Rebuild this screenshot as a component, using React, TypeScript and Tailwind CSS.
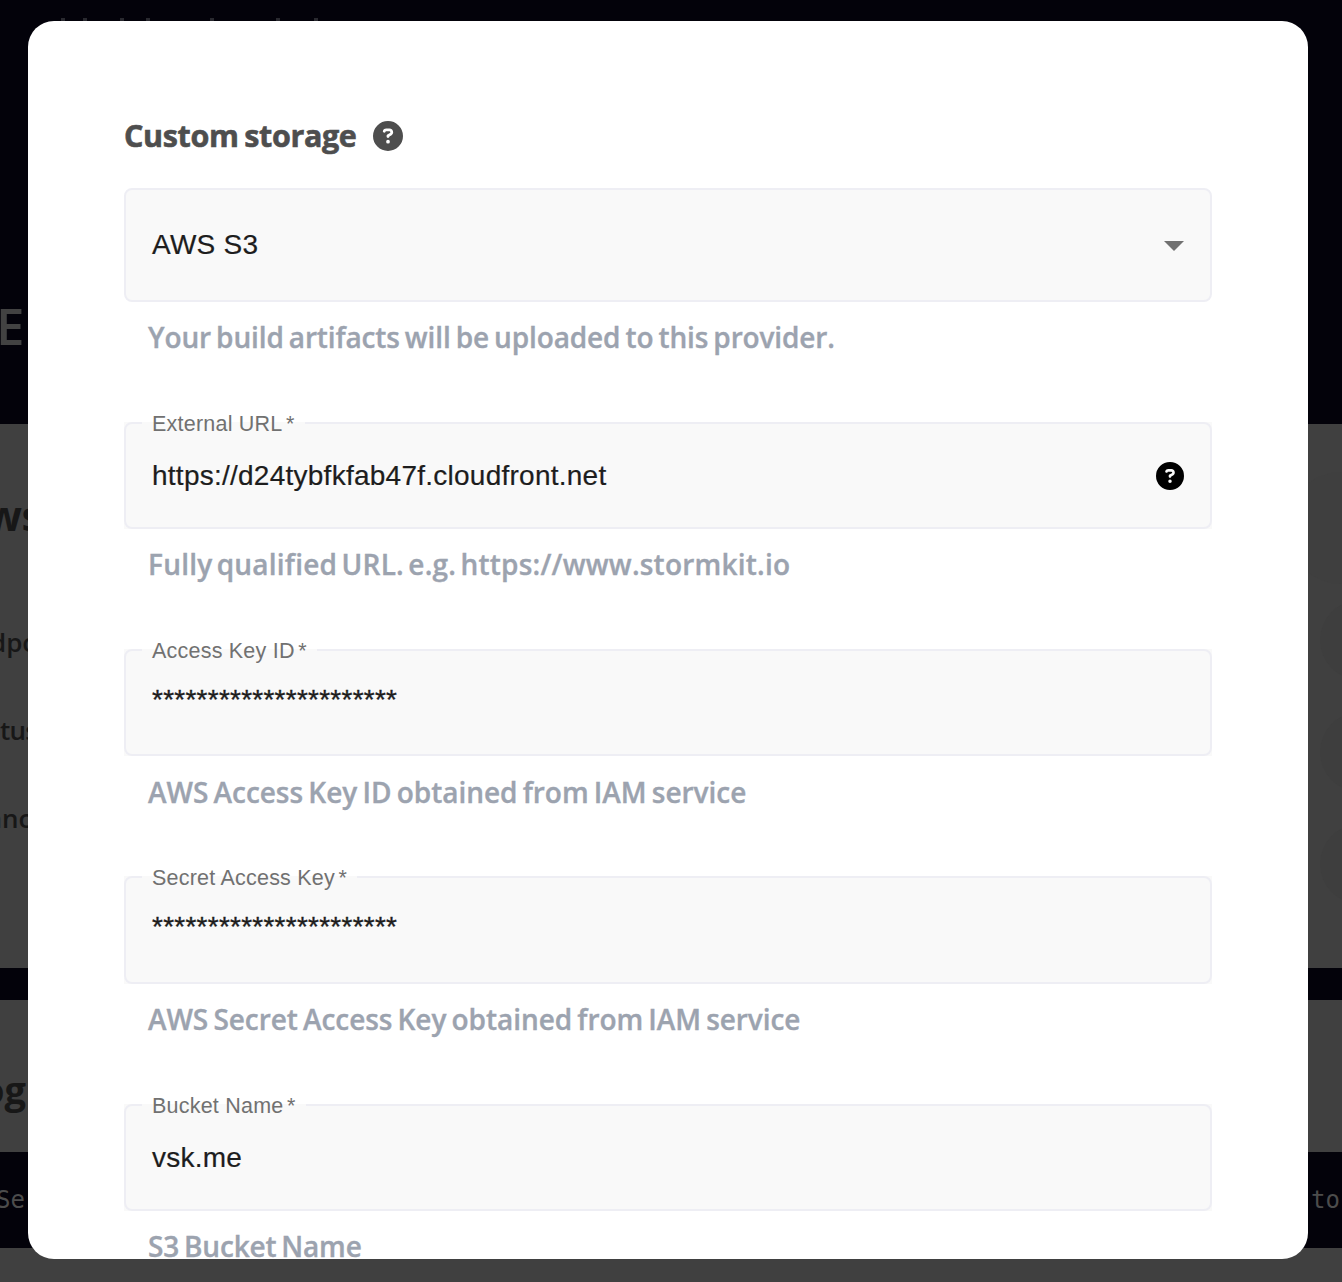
import { FaCircleQuestion } from "react-icons/fa6";
import { MdArrowDropDown } from "react-icons/md";

type FieldProps = {
  label: string;
  value: string;
  helper: string;
  info?: boolean;
  className?: string;
  boxClass?: string;
  valueClass?: string;
  helperClass?: string;
};

function Helper({ text, className = "" }: { text: string; className?: string }) {
  return (
    <p
      className={`pl-6 whitespace-nowrap font-['Open_Sans',sans-serif] text-[28px] leading-10 font-semibold text-[#9ca3af] [-webkit-text-stroke:0.35px_#9ca3af] ${className}`}
    >
      {text}
    </p>
  );
}

function Field({
  label,
  value,
  helper,
  info,
  className = "mb-[65px]",
  boxClass = "h-[107px]",
  valueClass = "[-webkit-text-stroke:0.2px_#1d1d1d]",
  helperClass = "mt-[15px]",
}: FieldProps) {
  return (
    <div className={className}>
      <div className="relative bg-[#f9f9f9]">
        <div
          className={`flex items-center justify-between rounded-lg border-2 border-[#eeeef4] px-[26px] ${boxClass}`}
        >
          <span className={`text-[28px] tracking-[0.25px] text-[#1d1d1d] ${valueClass}`}>{value}</span>
          {info && <FaCircleQuestion className="size-7 text-black" />}
        </div>
        <div className="absolute -top-[10px] left-[18px] px-[10px] text-[21.5px] leading-6 tracking-[0.22px] whitespace-nowrap text-[#717171]">
          <span className="absolute inset-x-0 top-[10px] h-[2px] bg-[#f9f9f9]" />
          <span className="relative">
            {label}
            <span className="ml-[3.5px]">*</span>
          </span>
        </div>
      </div>
      <Helper text={helper} className={helperClass} />
    </div>
  );
}

const headingMarks = [
  "ml-[61px]",
  "ml-[18px]",
  "ml-[33px]",
  "ml-[22px]",
  "ml-[60px]",
  "ml-[62px]",
  "ml-[34px]",
];

function Backdrop() {
  return (
    <div className="h-full bg-[#03020a] font-['Open_Sans',sans-serif] text-[#171717]">
      <div className="h-[424px]">
        <div className="flex pt-[18px]">
          {headingMarks.map((m) => (
            <span key={m} className={`h-[3px] w-1 bg-[#29292f] ${m}`} />
          ))}
        </div>
        <div className="mt-[274px] -ml-[4px] text-[51px] leading-[60px] font-semibold text-[#424242]">E</div>
      </div>

      <div className="relative h-[544px] overflow-hidden bg-[#404040] pt-[66px]">
        <div className="absolute top-[48px] -right-[56px] size-28 rounded-full bg-[#3f3f3f]" />
        <div className="absolute top-[176px] -right-[58px] size-20 rounded-full bg-[#3e3e3e]" />
        <div className="absolute top-[288px] -right-[58px] size-20 rounded-full bg-[#3e3e3e]" />
        <div className="absolute top-[400px] -right-[58px] size-20 rounded-full bg-[#3e3e3e]" />
        <div className="-ml-[14px] text-[42px] leading-[50px] font-bold tracking-[-0.5px]">ws</div>
        <div className="mt-[86px] -ml-[10px] text-[26px] leading-8 font-semibold">dpo</div>
        <div className="mt-14 text-[26px] leading-8 font-semibold tracking-[-0.8px]">tus</div>
        <div className="mt-14 -ml-[13px] text-[26px] leading-8 font-semibold">anc</div>
      </div>

      <div className="mt-8 h-[152px] bg-[#404040] pt-16">
        <div className="-ml-[19px] text-[38px] leading-[50px] font-bold">og</div>
      </div>
      <div className="flex h-24 justify-between pt-8 font-['DejaVu_Sans_Mono',monospace] text-[24px] leading-8 text-[#4c4c4c]">
        <span className="-ml-1">Se</span>
        <span className="mr-[2px]">to</span>
      </div>
      <div className="h-[34px] bg-[#404040]" />
    </div>
  );
}

export default function App() {
  return (
    <div className="relative h-[1282px] w-[1342px] overflow-hidden">
      <Backdrop />
      <div
        role="dialog"
        className="absolute top-[21px] left-[28px] h-[1238px] w-[1280px] overflow-hidden rounded-[26px] bg-white px-24 pt-[94px] font-['Liberation_Sans',Arial,sans-serif]"
      >
        <div className="flex h-10 items-center">
          <h2 className="w-[249px] whitespace-nowrap font-['Open_Sans',sans-serif] text-[30.5px] leading-10 font-bold tracking-[-0.35px] text-[#4e4e4e] [word-spacing:-2px] [-webkit-text-stroke:0.6px_#4e4e4e]">
            Custom storage
          </h2>
          <FaCircleQuestion className="mt-0.5 size-[30px] text-[#4e4e4e]" />
        </div>

        <div className="mt-[33px] mb-[65px]">
          <div className="flex h-[114px] items-center justify-between rounded-lg border-2 border-[#eeeef4] bg-[#f9f9f9] pr-3 pl-[26px]">
            <span className="text-[28px] tracking-[0.25px] text-[#1d1d1d] [-webkit-text-stroke:0.2px_#1d1d1d]">
              AWS S3
            </span>
            <MdArrowDropDown className="size-12 text-[#717171]" />
          </div>
          <Helper
            text="Your build artifacts will be uploaded to this provider."
            className="mt-[15px] tracking-[-0.14px] [word-spacing:-2px]"
          />
        </div>

        <Field
          label="External URL"
          value="https://d24tybfkfab47f.cloudfront.net"
          helper="Fully qualified URL. e.g. https://www.stormkit.io"
          helperClass="mt-[15px] tracking-[0.22px] [word-spacing:-3.2px]"
          info
        />
        <Field
          label="Access Key ID"
          value="**********************"
          valueClass="mb-[6px] [-webkit-text-stroke:0.35px_#1d1d1d]"
          helper="AWS Access Key ID obtained from IAM service"
          helperClass="mt-4 tracking-[-0.03px] [word-spacing:-2px]"
          className="mb-16"
        />
        <Field
          label="Secret Access Key"
          value="**********************"
          valueClass="mb-[6px] [-webkit-text-stroke:0.35px_#1d1d1d]"
          helper="AWS Secret Access Key obtained from IAM service"
          helperClass="mt-[15px] tracking-[-0.06px] [word-spacing:-2px]"
          boxClass="h-[108px]"
        />
        <Field
          label="Bucket Name"
          value="vsk.me"
          helper="S3 Bucket Name"
          helperClass="mt-[15px] tracking-[-0.2px] [word-spacing:-2px]"
        />
      </div>
    </div>
  );
}
